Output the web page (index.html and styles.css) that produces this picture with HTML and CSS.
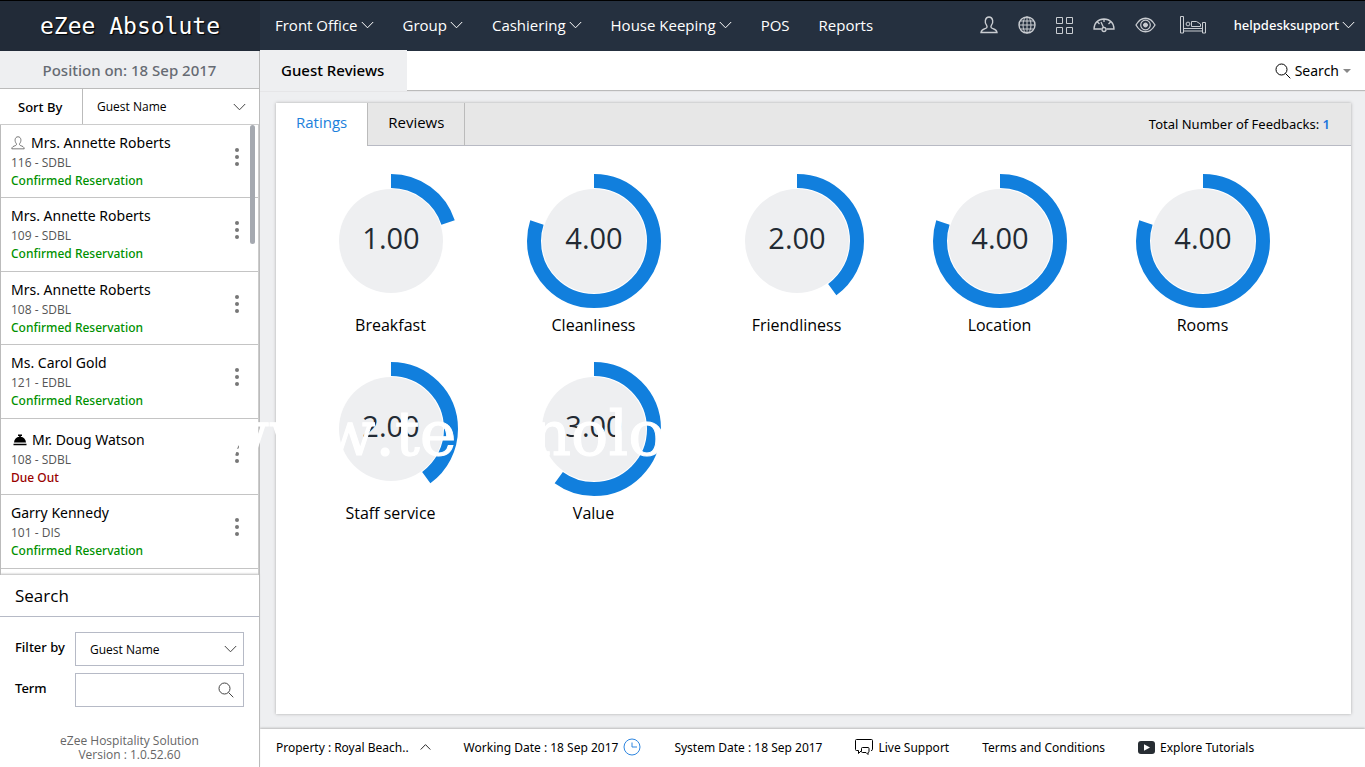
FILE: index.html
```html
<!DOCTYPE html>
<html lang="en">
<head>
    <meta charset="UTF-8" />
    <title>Guest Reviews - eZee Absolute</title>
    <link rel="stylesheet" href="styles.css">
</head>
<body>
    <svg class="symbols" aria-hidden="true">
        <symbol id="down" viewBox="0 0 13 8"><path d="M.8 1 6.500 6.800 12.200 1" /></symbol>
        <symbol id="person" viewBox="0 0 18 18"><path d="M6.600 9.300C4.500 7 4.600 1 9 1s4.500 6 2.400 8.300c-.8 1.200-.6 2.500 1 3.100 2.300.8 4.300 1.200 4.600 4.100H1c.3-2.900 2.300-3.300 4.600-4.100 1.600-.6 1.800-1.900 1-3.100z" /></symbol>
        <symbol id="lens" viewBox="0 0 16 16"><circle cx="6.500" cy="6.500" r="5.500" /><path d="M10.500 10.500 15.300 15.300" /></symbol>
    </svg>

    <header class="topbar">
        <div class="logo">eZee Absolute</div>
        <nav class="menu">
            <button type="button">Front Office <svg class="chev"><use href="#down" /></svg></button>
            <button type="button">Group <svg class="chev"><use href="#down" /></svg></button>
            <button type="button">Cashiering <svg class="chev"><use href="#down" /></svg></button>
            <button type="button">House Keeping <svg class="chev"><use href="#down" /></svg></button>
            <a href="#pos">POS</a>
            <a href="#reports">Reports</a>
        </nav>
        <div class="tools">
            <button type="button" aria-label="Guests"><svg class="guest" width="18" height="18"><use href="#person" /></svg></button>
            <button type="button" aria-label="Web">
                <svg width="18" height="18" viewBox="0 0 18 18"><circle cx="9" cy="9" r="8" stroke-width="1.400" /><ellipse cx="9" cy="9" rx="4" ry="8" /><path d="M9 1v16M1 9h16M2.500 5h13M2.500 13h13" /></svg>
            </button>
            <button type="button" aria-label="Modules">
                <svg width="17" height="17" viewBox="0 0 17 17"><path d="M.5.5h6v6h-6zM10.500.5h6v6h-6zM.5 10.500h6v6h-6zM10.500 10.500h6v6h-6z" /></svg>
            </button>
            <button type="button" aria-label="Dashboard">
                <svg width="22" height="16" viewBox="0 0 22 16"><path d="M8.500 12H1C1 6 5 2 11 2s10 4 10 10h-7.500M11 2v3M4.500 5l2 2M17.500 5l-2 2M10.500 10.500 8 5" stroke-width="1.300" /><circle cx="11" cy="12.500" r="2" stroke-width="1.300" /></svg>
            </button>
            <button type="button" aria-label="View">
                <svg width="21" height="16" viewBox="0 0 21 16"><path d="M1 8c5-9 14-9 19 0-5 9-14 9-19 0z" stroke-width="1.300" /><circle cx="10.500" cy="8" r="4.800" stroke-width="1.200" /><circle cx="10.500" cy="8" r="2" class="solid" /></svg>
            </button>
            <button type="button" aria-label="Rooms" class="bed">
                <svg width="27" height="18" viewBox="0 0 27 18"><path d="M.5.500h3v16.500h-3zM3.500 12.500h19v2.500h-19M22.500 6.500h3v10.500h-3zM11.500 10.500v-5h5l4 2.500v2.500z" /><circle cx="8" cy="8" r="1.900" /></svg>
            </button>
            <button type="button" class="account">helpdesksupport <svg class="chev"><use href="#down" /></svg></button>
        </div>
    </header>

    <div class="page">
        <aside class="sidebar">
            <h2 class="position">Position on: 18 Sep 2017</h2>
            <div class="sort">
                <label for="sort">Sort By</label>
                <div class="picker">
                    <select id="sort"><option>Guest Name</option></select>
                    <svg class="chev"><use href="#down" /></svg>
                </div>
            </div>
            <ul class="guests">
                <li>
                    <div>
                        <h3><svg class="person" width="14" height="14"><use href="#person" /></svg>Mrs. Annette Roberts</h3>
                        <p>116 - SDBL</p>
                        <p class="confirmed">Confirmed Reservation</p>
                    </div>
                    <button type="button" class="more" aria-label="Actions"><i></i><i></i><i></i></button>
                </li>
                <li>
                    <div>
                        <h3>Mrs. Annette Roberts</h3>
                        <p>109 - SDBL</p>
                        <p class="confirmed">Confirmed Reservation</p>
                    </div>
                    <button type="button" class="more" aria-label="Actions"><i></i><i></i><i></i></button>
                </li>
                <li>
                    <div>
                        <h3>Mrs. Annette Roberts</h3>
                        <p>108 - SDBL</p>
                        <p class="confirmed">Confirmed Reservation</p>
                    </div>
                    <button type="button" class="more" aria-label="Actions"><i></i><i></i><i></i></button>
                </li>
                <li>
                    <div>
                        <h3>Ms. Carol Gold</h3>
                        <p>121 - EDBL</p>
                        <p class="confirmed">Confirmed Reservation</p>
                    </div>
                    <button type="button" class="more" aria-label="Actions"><i></i><i></i><i></i></button>
                </li>
                <li class="leaving">
                    <div>
                        <h3><svg class="bell" width="14" height="12" viewBox="0 0 14 12"><path d="M1 8.500c.2-3.400 2.500-5.400 5.200-5.700V2H5V.5h4V2H7.800v.8c2.700.3 5 2.300 5.200 5.700zM.5 9.700h13v1.600H.5z" /></svg>Mr. Doug Watson</h3>
                        <p>108 - SDBL</p>
                        <p class="due">Due Out</p>
                    </div>
                    <button type="button" class="more" aria-label="Actions"><i></i><i></i><i></i></button>
                </li>
                <li>
                    <div>
                        <h3>Garry Kennedy</h3>
                        <p>101 - DIS</p>
                        <p class="confirmed">Confirmed Reservation</p>
                    </div>
                    <button type="button" class="more" aria-label="Actions"><i></i><i></i><i></i></button>
                </li>
            </ul>
            <section class="finder">
                <h2>Search</h2>
                <form>
                    <label for="filter">Filter by</label>
                    <div class="picker">
                        <select id="filter"><option>Guest Name</option></select>
                        <svg class="chev"><use href="#down" /></svg>
                    </div>
                    <label for="term">Term</label>
                    <div class="picker">
                        <input type="text" id="term">
                        <svg class="lens" width="16" height="16"><use href="#lens" /></svg>
                    </div>
                </form>
                <p class="version">eZee Hospitality Solution<br>Version : 1.0.52.60</p>
            </section>
        </aside>

        <main>
            <div class="tabbar">
                <h1>Guest Reviews</h1>
                <button type="button"><svg width="16" height="16"><use href="#lens" /></svg>Search<span class="caret"></span></button>
            </div>
            <section class="panel">
                <div class="tabs">
                    <button type="button" class="active">Ratings</button>
                    <button type="button">Reviews</button>
                    <p>Total Number of Feedbacks: <b>1</b></p>
                </div>
                <div class="ratings">
                    <figure>
                        <svg viewBox="0 0 134 134"><circle class="disc" cx="67" cy="67" r="52" /><circle class="arc" cx="67" cy="67" r="60" pathLength="5" stroke-dasharray="1 5" /><text x="67" y="75">1.00</text></svg>
                        <figcaption>Breakfast</figcaption>
                    </figure>
                    <figure>
                        <svg viewBox="0 0 134 134"><circle class="disc" cx="67" cy="67" r="52" /><circle class="arc" cx="67" cy="67" r="60" pathLength="5" stroke-dasharray="4 5" /><text x="67" y="75">4.00</text></svg>
                        <figcaption>Cleanliness</figcaption>
                    </figure>
                    <figure>
                        <svg viewBox="0 0 134 134"><circle class="disc" cx="67" cy="67" r="52" /><circle class="arc" cx="67" cy="67" r="60" pathLength="5" stroke-dasharray="2 5" /><text x="67" y="75">2.00</text></svg>
                        <figcaption>Friendliness</figcaption>
                    </figure>
                    <figure>
                        <svg viewBox="0 0 134 134"><circle class="disc" cx="67" cy="67" r="52" /><circle class="arc" cx="67" cy="67" r="60" pathLength="5" stroke-dasharray="4 5" /><text x="67" y="75">4.00</text></svg>
                        <figcaption>Location</figcaption>
                    </figure>
                    <figure>
                        <svg viewBox="0 0 134 134"><circle class="disc" cx="67" cy="67" r="52" /><circle class="arc" cx="67" cy="67" r="60" pathLength="5" stroke-dasharray="4 5" /><text x="67" y="75">4.00</text></svg>
                        <figcaption>Rooms</figcaption>
                    </figure>
                    <figure>
                        <svg viewBox="0 0 134 134"><circle class="disc" cx="67" cy="67" r="52" /><circle class="arc" cx="67" cy="67" r="60" pathLength="5" stroke-dasharray="2 5" /><text x="67" y="75">2.00</text></svg>
                        <figcaption>Staff service</figcaption>
                    </figure>
                    <figure>
                        <svg viewBox="0 0 134 134"><circle class="disc" cx="67" cy="67" r="52" /><circle class="arc" cx="67" cy="67" r="60" pathLength="5" stroke-dasharray="3 5" /><text x="67" y="75">3.00</text></svg>
                        <figcaption>Value</figcaption>
                    </figure>
                </div>
            </section>
            <footer>
                <button type="button" class="property">Property : <span>Royal Beach..</span><svg class="chev up"><use href="#down" /></svg></button>
                <span class="working">Working Date : 18 Sep 2017
                    <svg width="18" height="18" viewBox="0 0 18 18"><circle cx="9" cy="9" r="8" /><path d="M9 4.500V9h5" /></svg>
                </span>
                <span>System Date : 18 Sep 2017</span>
                <a href="#support">
                    <svg width="18" height="17" viewBox="0 0 18 17"><path d="M6.500 11.500 3.500 14.500v-3h-2q-1 0-1-1v-9q0-1 1-1h15q1 0 1 1v9q0 1-1.500 1M7.500 8.500h5.500q1 0 1 1v3q0 1-1 1v2l-2-2H7.500q-1 0-1-1v-3q0-1 1-1z" /></svg>
                    Live Support</a>
                <a href="#terms">Terms and Conditions</a>
                <a href="#tutorials">
                    <svg class="video" width="17" height="13" viewBox="0 0 17 13"><rect width="17" height="13" rx="3" /><path d="M6 3.200v6.600l6-3.300z" /></svg>
                    Explore Tutorials</a>
            </footer>
        </main>
    </div>
    <div class="watermark" aria-hidden="true">www.technolo</div>
</body>
</html>
```
FILE: styles.css
```css
* {
    box-sizing: border-box;
}

body {
    margin: 0;
    height: 100vh;
    display: flex;
    flex-direction: column;
    overflow: hidden;
    position: relative;
    background: #eeeff1;
    color: #000;
    font-family: "Open Sans", "Noto Sans", sans-serif;
    font-size: 12px;
}

h1, h2, h3, p, ul, figure {
    margin: 0;
    padding: 0;
    font-weight: 400;
}

button, input, select {
    font: inherit;
    color: inherit;
    background: none;
    border: none;
    padding: 0;
}

button {
    cursor: pointer;
}

a {
    color: inherit;
    text-decoration: none;
}

svg {
    fill: none;
    stroke: currentColor;
    flex-shrink: 0;
}

.symbols {
    display: none;
}

.chev {
    width: 13px;
    height: 8px;
}

/* top bar */
.topbar {
    display: flex;
    align-items: center;
    height: 51px;
    flex-shrink: 0;
    border-top: 1px solid #000;
    background: #25303f;
    color: #fff;
}

.logo {
    width: 260px;
    height: 50px;
    line-height: 50px;
    text-align: center;
    background: #222b38;
    font-family: "DejaVu Sans Mono", monospace;
    font-size: 23px;
    text-shadow: 1px 1px 1px #000;
}

.menu {
    display: flex;
    gap: 29px;
    padding: 0 0 2px 15px;
    font-size: 15px;
}

.menu button, .account {
    display: flex;
    align-items: center;
    gap: 3px;
}

.tools {
    display: flex;
    align-items: center;
    gap: 20px;
    margin-left: auto;
    padding: 0 10px 2px 0;
    color: #c9ccd1;
}

.tools button {
    display: flex;
    align-items: center;
}

.tools .guest {
    stroke-width: 1.400;
}

.tools .solid {
    fill: currentColor;
}

.tools .bed {
    margin: 0 7px 0 4px;
}

.tools .account {
    color: #fff;
    font-family: "Noto Sans", sans-serif;
    font-size: 13px;
    font-weight: 500;
}

.page {
    display: flex;
    flex: 1;
    min-height: 0;
}

/* sidebar */
.sidebar {
    display: flex;
    flex-direction: column;
    width: 260px;
    flex-shrink: 0;
    border-right: 1px solid #bbb;
    background: #fff;
}

.position {
    height: 38px;
    line-height: 38px;
    border-bottom: 1px solid #bbb;
    background: #eeeff1;
    color: #666b73;
    text-align: center;
    font-family: "Noto Sans", sans-serif;
    font-size: 15px;
    font-weight: 500;
}

.sort {
    display: flex;
    height: 36px;
    border-bottom: 1px solid #ccc;
}

.sort label {
    width: 83px;
    padding-left: 18px;
    line-height: 36px;
    border-right: 1px solid #bbb;
    font-family: "Noto Sans", sans-serif;
    font-size: 13px;
    font-weight: 500;
}

.picker {
    display: grid;
    flex: 1;
    align-items: center;
}

.picker > * {
    grid-area: 1 / 1;
}

.picker select, .picker input {
    appearance: none;
    width: 100%;
    height: 34px;
    padding-left: 14px;
}

.picker svg {
    justify-self: end;
    margin-right: 13px;
    color: #444;
    pointer-events: none;
}

.guests {
    position: relative;
    flex: 1;
    min-height: 0;
    overflow: hidden;
    list-style: none;
    border-left: 1px solid #bbb;
    border-right: 1px solid #ccc;
}

/* scroll thumb */
.guests::after {
    content: "";
    position: absolute;
    top: 0;
    right: 3px;
    width: 5px;
    height: 119px;
    border-radius: 3px;
    background: #a5a9b0;
}

.guests li {
    display: flex;
    justify-content: space-between;
    height: 73px;
    padding: 7px 19px 0 10px;
    border-bottom: 1px solid #c4c4c4;
}

.guests li:nth-child(even) {
    height: 74px;
}

.guests .leaving {
    height: 76px;
    padding-top: 10px;
}

.guests h3 {
    display: flex;
    align-items: center;
    line-height: 22px;
    font-family: "Noto Sans", sans-serif;
    font-size: 14px;
}

.guests p {
    line-height: 18px;
    color: #555;
}

.guests .confirmed, .guests .due {
    font-family: "Noto Sans", sans-serif;
    font-weight: 500;
}

.guests .confirmed {
    color: #009100;
}

.guests .due {
    color: #900;
}

.person {
    margin-right: 6px;
    color: #555;
}

.bell {
    margin: 0 5px 0 2px;
    fill: #000;
    stroke: none;
}

.more {
    display: flex;
    flex-direction: column;
    align-self: flex-start;
    gap: 3px;
    margin-top: 16px;
}

.more i {
    width: 4px;
    height: 4px;
    border-radius: 50%;
    background: #777;
}

.finder {
    height: 192px;
    box-shadow: 0 -1px 2px #bbb;
    position: relative;
    background: #fff;
}

.finder h2 {
    height: 42px;
    padding-left: 15px;
    line-height: 42px;
    border-bottom: 1px solid #b6bac6;
    font-size: 17px;
}

.finder form {
    display: grid;
    grid-template-columns: 60px 1fr;
    row-gap: 7px;
    padding: 15px 15px 0;
}

.finder label {
    line-height: 31px;
    font-family: "Noto Sans", sans-serif;
    font-size: 13px;
    font-weight: 500;
}

.finder .picker select, .finder .picker input {
    border: 1px solid #b6bac6;
}

.finder .picker .chev {
    margin-right: 7px;
}

.finder .picker .lens {
    margin-right: 10px;
}

.version {
    padding-top: 27px;
    line-height: 14px;
    color: #666;
    text-align: center;
}

/* content */
main {
    display: flex;
    flex: 1;
    flex-direction: column;
    min-width: 0;
}

.tabbar {
    display: flex;
    align-items: center;
    justify-content: space-between;
    height: 39px;
    padding-right: 14px;
    background: #fff;
    box-shadow: 0 1px 1px #bbb;
}

.tabbar h1 {
    height: 41px;
    padding: 0 23px 0 21px;
    line-height: 41px;
    background: #eeeff1;
    font-family: "Noto Sans", sans-serif;
    font-size: 15px;
    font-weight: 500;
}

.tabbar button {
    display: flex;
    align-items: center;
    gap: 4px;
    font-family: "Noto Sans", sans-serif;
    font-size: 14px;
}

.caret {
    border: 4px solid transparent;
    border-top-color: #888;
    border-bottom: none;
}

.panel {
    flex: 1;
    min-height: 0;
    margin: 13px 14px 15px 16px;
    background: #fff;
    box-shadow: 0 0 3px #aaa;
}

.tabs {
    display: flex;
    height: 43px;
    border-bottom: 1px solid #b8bac4;
    background: #e7e7e7;
}

.tabs button {
    height: 43px;
    padding: 0 20px 6px;
    border-right: 1px solid #bbb;
    font-size: 15px;
}

.tabs .active {
    background: #fff;
    color: #1c81dc;
}

.tabs p {
    margin-left: auto;
    padding-right: 21px;
    line-height: 42px;
    font-family: "Noto Sans", sans-serif;
    font-size: 13px;
}

.tabs b {
    color: #1c75dc;
    font-weight: 600;
}

.ratings {
    display: grid;
    grid-template-columns: repeat(5, 1fr);
    row-gap: 26px;
    padding: 28px 47px 0 13px;
}

.ratings figure {
    display: flex;
    flex-direction: column;
    align-items: center;
    gap: 6px;
}

.ratings svg {
    width: 134px;
    height: 134px;
}

.ratings .disc {
    fill: #eeeff1;
    stroke: none;
}

.ratings .arc {
    stroke: #117fdd;
    stroke-width: 14px;
    transform: rotate(-90deg);
    transform-origin: center;
}

.ratings text {
    fill: #222a33;
    stroke: none;
    font-size: 29px;
    text-anchor: middle;
}

.ratings figcaption {
    line-height: 22px;
    font-size: 16px;
}

footer {
    display: flex;
    align-items: center;
    height: 38px;
    padding: 0 0 2px 16px;
    background: #fff;
    box-shadow: 0 -1px 2px #bbb;
    font-family: "Noto Sans", sans-serif;
    white-space: nowrap;
}

footer > * {
    display: flex;
    align-items: center;
    gap: 5px;
    margin-right: 33px;
}

.property {
    gap: 3px;
}

.property .chev {
    width: 11px;
    margin-left: 8px;
}

.up {
    transform: rotate(180deg);
}

.working svg {
    stroke: #2e86e0;
}

.video {
    fill: #272d33;
    stroke: none;
}

.video path {
    fill: #fff;
}

/* faint site mark over the whole screen */
.watermark {
    position: absolute;
    left: 216px;
    top: 398px;
    color: #fff;
    font-family: "DejaVu Serif", serif;
    font-size: 62px;
    font-kerning: none;
    line-height: 72px;
    -webkit-text-stroke: 1px #fff;
    pointer-events: none;
}
```
